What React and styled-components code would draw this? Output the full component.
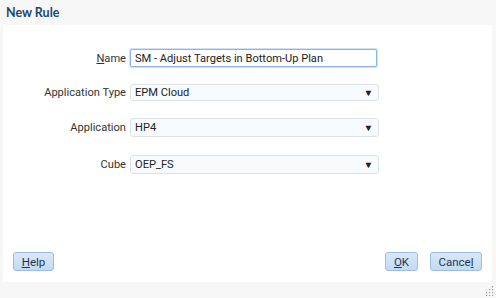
import React, { useState } from 'react';
import styled, { createGlobalStyle } from 'styled-components';

const GlobalStyle = createGlobalStyle`
  html, body {
    margin: 0;
    padding: 0;
    background: #f7f7f7;
  }
  body {
    font-family: Roboto, "Open Sans", sans-serif;
    font-size: 11.1px;
  }
`;

const Dialog = styled.div`
  width: 496px;
  height: 298px;
  box-sizing: border-box;
  background: #f7f7f7;
  display: flex;
  flex-direction: column;
  position: relative;
  overflow: hidden;
`;

const Title = styled.div`
  height: 25px;
  padding-left: 6px;
  box-sizing: border-box;
  display: flex;
  align-items: center;
  font-family: Lato, sans-serif;
  font-weight: bold;
  font-size: 12.5px;
  color: #19486e;
`;

const Body = styled.div`
  margin: 0 4px 0 3px;
  height: 257px;
  background: #fff;
  display: flex;
  flex-direction: column;
  padding: 24px 10px 0 10px;
  box-sizing: border-box;
`;

const Form = styled.div`
  display: flex;
  flex-direction: column;
  gap: 17px;
`;

const Row = styled.div`
  display: grid;
  grid-template-columns: 113px 249px;
  column-gap: 4px;
  align-items: center;
  margin-top: ${(p) => p.mt || 0}px;
`;

const Label = styled.label`
  text-align: right;
  color: #333;
  white-space: nowrap;
`;

const Key = styled.span`
  text-decoration: underline;
`;

const TextInput = styled.input`
  box-sizing: border-box;
  width: 247px;
  height: 18px;
  border: 1px solid #8fb2e8;
  border-radius: 2px;
  box-shadow: 0 0 0 1px #cfe0f8;
  padding: 0 4px;
  font: inherit;
  color: #222;
  outline: none;
`;

const Select = styled.div`
  box-sizing: border-box;
  width: 249px;
  height: ${(p) => p.h || 18}px;
  border: 1px solid #dde2e7;
  border-radius: 3px;
  background: #f8fbfe;
  display: flex;
  align-items: center;
  justify-content: space-between;
  padding: 0 5px 0 4px;
  color: #222;
`;

const Arrow = styled.span`
  font-size: 9px;
  color: #222;
  transform: scaleX(1.1);
`;

const Footer = styled.div`
  margin-top: auto;
  display: flex;
  align-items: center;
  justify-content: space-between;
  height: 19px;
  padding-bottom: 11px;
`;

const Group = styled.div`
  display: flex;
  gap: 12px;
`;

const Button = styled.button`
  box-sizing: border-box;
  height: 19px;
  width: ${(p) => p.w}px;
  padding: 0;
  border: 1px solid #9dbde0;
  border-radius: 3px;
  background: linear-gradient(#d9e8f8, #c3daf3);
  font: inherit;
  font-size: 11.5px;
  color: #1e3550;
  cursor: pointer;
`;

const Grip = styled.svg`
  position: absolute;
  right: 2px;
  bottom: 2px;
`;

const App = () => {
  const [name, setName] = useState('SM - Adjust Targets in Bottom-Up Plan');

  return (
    <>
      <GlobalStyle />
      <Dialog>
        <Title>New Rule</Title>
        <Body>
          <Form>
            <Row>
              <Label>
                <Key>N</Key>ame
              </Label>
              <TextInput value={name} onChange={(e) => setName(e.target.value)} />
            </Row>
            <Row>
              <Label>Application Type</Label>
              <Select h={17}>
                EPM Cloud<Arrow>▼</Arrow>
              </Select>
            </Row>
            <Row>
              <Label>Application</Label>
              <Select h={19}>
                HP4<Arrow>▼</Arrow>
              </Select>
            </Row>
            <Row mt={1}>
              <Label>Cube</Label>
              <Select h={19}>
                OEP_FS<Arrow>▼</Arrow>
              </Select>
            </Row>
          </Form>
          <Footer>
            <Button w={41}>
              <Key>H</Key>elp
            </Button>
            <Group>
              <Button w={33}>
                <Key>O</Key>K
              </Button>
              <Button w={52}>
                Cance<Key>l</Key>
              </Button>
            </Group>
          </Footer>
        </Body>
        <Grip width="10" height="10" viewBox="0 0 10 10">
          {[[8, 0], [8, 3], [5, 3], [8, 6], [5, 6], [2, 6], [8, 9], [5, 9], [2, 9]].map(([x, y], i) => (
            <rect key={i} x={x} y={y} width="1.2" height="1.2" fill="#9a9a9a" />
          ))}
        </Grip>
      </Dialog>
    </>
  );
};

export default App;
